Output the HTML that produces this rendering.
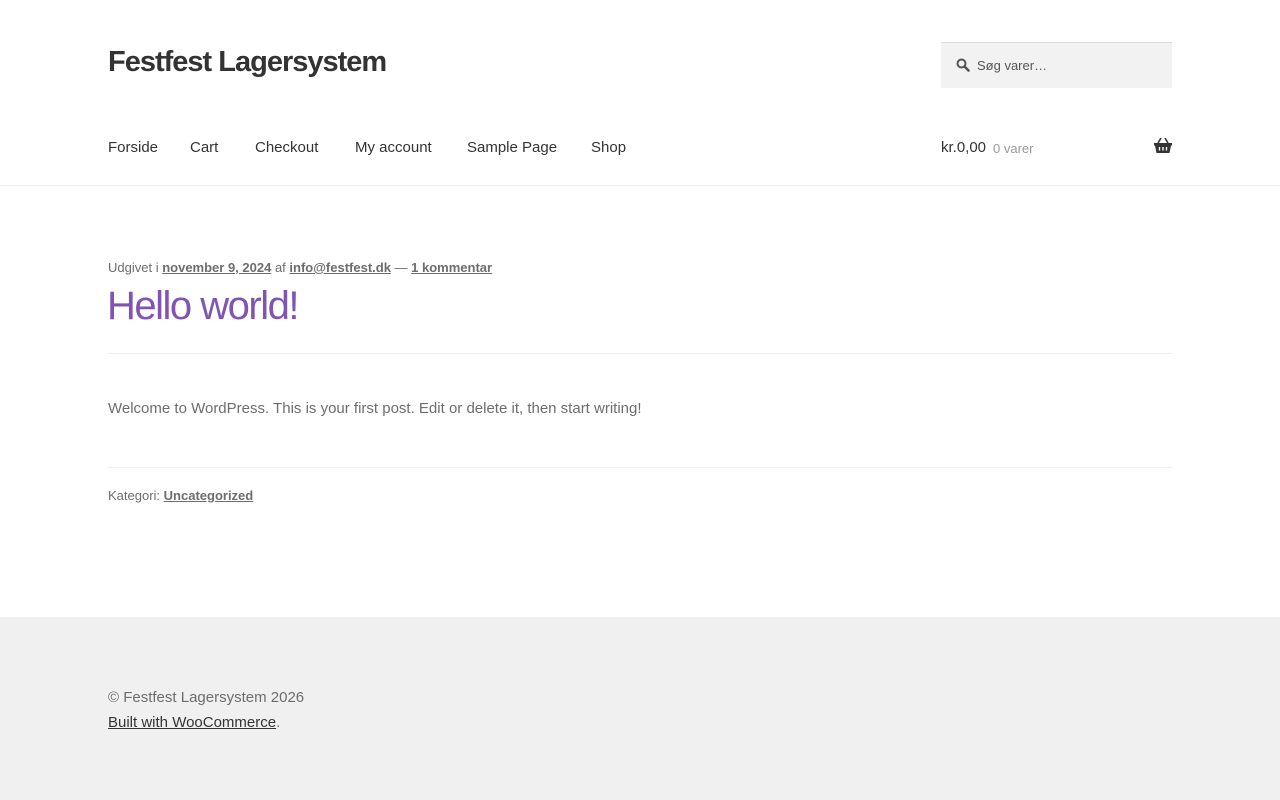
<!DOCTYPE html>
<html><head><meta charset="utf-8"><style>
*{margin:0;padding:0;box-sizing:border-box}
body{width:1280px;height:800px;background:#fff;font-family:"Liberation Sans",sans-serif;color:#6d6d6d;position:relative;overflow:hidden}
.a{position:absolute;white-space:nowrap}
a{color:inherit;text-decoration:underline}
</style></head><body>
<div class="a" style="left:108px;top:46px;font-size:29px;font-weight:bold;color:#333;letter-spacing:-1px">Festfest Lagersystem</div>
<div class="a" style="left:941px;top:42px;width:231px;height:46px;background:#f2f2f2;border-top:1px solid #ddd"></div>
<svg class="a" style="left:956px;top:58px" width="14" height="14" viewBox="0 0 14 14"><circle cx="5.5" cy="5.5" r="4" fill="none" stroke="#555" stroke-width="2"/><path d="M8.5 8.5L12.5 12.5" stroke="#555" stroke-width="2.6" stroke-linecap="round"/></svg>
<div class="a" style="left:977px;top:58px;font-size:13px;color:#555">Søg varer…</div>
<div class="a" style="top:139px;font-size:15px;color:#333;left:108px">Forside</div>
<div class="a" style="top:139px;font-size:15px;color:#333;left:190px">Cart</div>
<div class="a" style="top:139px;font-size:15px;color:#333;left:255px">Checkout</div>
<div class="a" style="top:139px;font-size:15px;color:#333;left:355px">My account</div>
<div class="a" style="top:139px;font-size:15px;color:#333;left:467px">Sample Page</div>
<div class="a" style="top:139px;font-size:15px;color:#333;left:591px">Shop</div>
<div class="a" style="top:139px;font-size:15px;color:#333;left:941px">kr.0,00</div>
<div class="a" style="top:141px;font-size:13px;color:#999;left:993px">0 varer</div>
<svg class="a" style="left:1154px;top:138px" width="18" height="15" viewBox="0 0 18 15"><path d="M0 5h18v2.5h-1L15.5 15h-13L1 7.5H0z" fill="#333"/><path d="M4 5L7 0M14 5L11 0" stroke="#333" stroke-width="1.6"/><path d="M5.5 9v3.5M9 9v3.5M12.5 9v3.5" stroke="#fff" stroke-width="1.4"/></svg>
<div class="a" style="left:0;top:185px;width:1280px;height:1px;background:#eee"></div>
<div class="a" style="left:108px;top:260px;font-size:13px">Udgivet i <b><a>november 9, 2024</a></b> af <b><a>info@festfest.dk</a></b> — <b><a>1 kommentar</a></b></div>
<div class="a" style="left:107px;top:284px;font-size:40px;color:#7f54b3;font-weight:300;letter-spacing:-1.5px">Hello world!</div>
<div class="a" style="left:108px;top:353px;width:1064px;height:1px;background:#eee"></div>
<div class="a" style="left:108px;top:400px;font-size:15px">Welcome to WordPress. This is your first post. Edit or delete it, then start writing!</div>
<div class="a" style="left:108px;top:467px;width:1064px;height:1px;background:#f2f2f2"></div>
<div class="a" style="left:108px;top:488px;font-size:13px">Kategori: <b><a>Uncategorized</a></b></div>
<div class="a" style="left:0;top:617px;width:1280px;height:183px;background:#f0f0f0"></div>
<div class="a" style="left:108px;top:689px;font-size:15px">© Festfest Lagersystem 2026</div>
<div class="a" style="left:108px;top:714px;font-size:15px"><a style="color:#333">Built with WooCommerce</a>.</div>
</body></html>
